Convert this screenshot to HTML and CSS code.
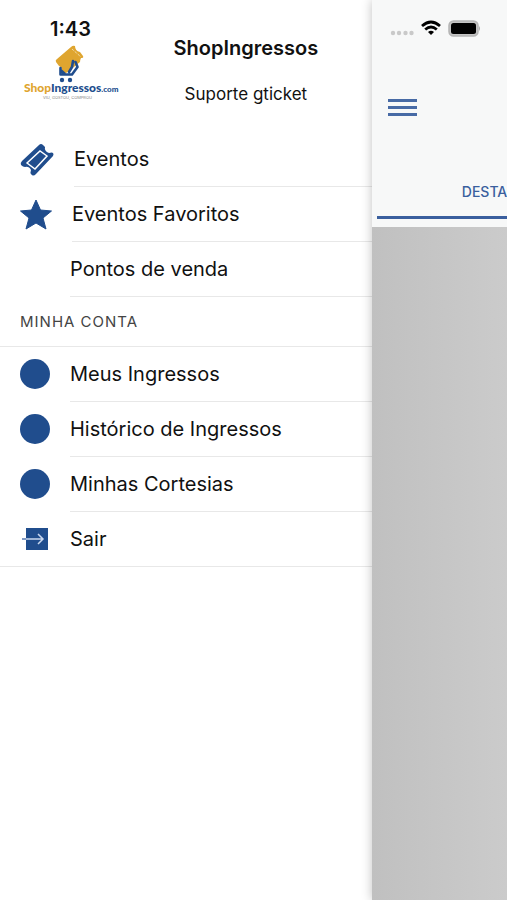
FILE: index.html
```html
<!DOCTYPE html>
<html lang="pt-BR">
<head>
<meta charset="utf-8">
<meta name="viewport" content="width=device-width, initial-scale=1">
<title>ShopIngressos</title>
<link rel="stylesheet" href="styles.css">
</head>
<body>
<div class="app">
  <aside class="drawer">
    <header class="profile">
      <div class="brand">
        <time class="clock">1:43</time>
        <svg class="logo" viewBox="0 0 96 58" role="img" aria-label="ShopIngressos.com">
          <path d="M33 18q-1-2 1-3L48 3q2-2 4-1 0 5 5 6l3 4q1 2-2 2-1 2-1 4L46 27l-3 2q-3 0-4-3 0-3-3-4Z" fill="#dfa52f"/>
          <path d="m49 5 9 8" stroke="#fbf0d8" stroke-width="1" stroke-dasharray="1 1" fill="none"/>
          <path d="M37.500 24v6.500H49l5.500-7.500-2-5M37.500 26l4 3.500M50 17l-1 6-3 5" fill="none" stroke="#204d8d" stroke-width="2.600" stroke-linejoin="round" stroke-linecap="round"/>
          <circle cx="39" cy="36" r="2.2" fill="#204d8d"/><circle cx="47" cy="36" r="2.2" fill="#204d8d"/>
          <text x="1" y="48" class="logo-name"><tspan class="logo-gold">Shop</tspan><tspan>Ingressos</tspan><tspan class="logo-com">.com</tspan></text>
          <text x="20" y="55" class="logo-tag">VIU, GOSTOU, COMPROU</text>
        </svg>
      </div>
      <div class="identity">
        <h1>ShopIngressos</h1>
        <p>Suporte gticket</p>
      </div>
    </header>
    <nav>
      <ul class="menu">
        <li><a href="#eventos">
          <svg class="icon wide" viewBox="0 0 34 34" aria-hidden="true"><path d="M2 18 19 2q2-2 4 0l2 2q-1 4 4 6 3-1 4 0 1 1 0 3L16 31q-3 3-5 0-1-1 0-4-2-4-6-3-2 0-4-2-1-2 1-4Z" fill="#204d8d"/><path d="m7 20 13-12 7 5-12 13Z" fill="none" stroke="#fff" stroke-width="1.500"/></svg>
          <span class="label">Eventos</span></a></li>
        <li><a href="#favoritos">
          <svg class="icon mid" viewBox="0 0 32 32" aria-hidden="true"><path d="m16 1 4.500 10 11 1-8.500 7 3 11-10-6-10 6 3-11-8.500-7 11-1Z" fill="#204d8d" stroke="#204d8d" stroke-linejoin="round"/></svg>
          <span class="label">Eventos Favoritos</span></a></li>
        <li><a href="#pontos"><span class="icon"></span><span class="label">Pontos de venda</span></a></li>
      </ul>
      <h2>MINHA CONTA</h2>
      <ul class="menu account">
        <li><a href="#ingressos"><span class="icon dot"></span><span class="label">Meus Ingressos</span></a></li>
        <li><a href="#historico"><span class="icon dot"></span><span class="label">Histórico de Ingressos</span></a></li>
        <li><a href="#cortesias"><span class="icon dot"></span><span class="label">Minhas Cortesias</span></a></li>
        <li><a href="#sair">
          <svg class="icon" viewBox="0 0 30 30" aria-hidden="true"><path d="M6 4h22v22H6Z" fill="#204d8d"/><path d="M2 15h4" stroke="#7f99c4" stroke-width="2"/><path d="M6 15h17m-5-5 5 5-5 5" fill="none" stroke="#c9d7ee" stroke-width="1.5"/></svg>
          <span class="label">Sair</span></a></li>
      </ul>
    </nav>
  </aside>
  <main class="page">
    <header class="topbar">
      <svg class="status" viewBox="0 0 92 20" role="img" aria-label="Wi-Fi e bateria">
        <g fill="#c9c9c9"><circle cx="5" cy="15" r="2.2"/><circle cx="11" cy="15" r="2.2"/><circle cx="17.500" cy="15" r="2.2"/><circle cx="23.500" cy="15" r="2.200"/></g>
        <g fill="none" stroke="#000" stroke-width="2.800"><path d="M34 8q9-8 18 0"/><path d="M37.200 11.500q5.800-5 11.600 0"/></g>
        <path d="m43 17-3-3q3-2.500 6 0Z" fill="#000"/>
        <rect x="61" y="3" width="29" height="15" rx="4.500" fill="#c4c4c4" stroke="#b4b4b4" stroke-width="1.500"/>
        <rect x="63" y="5" width="25" height="11" rx="2.500"/>
        <path d="M91 8q2 2.500 0 5Z" fill="#aaa"/>
      </svg>
      <button class="burger" type="button" aria-label="Menu"><span></span><span></span><span></span></button>
      <div class="tabs"><a href="#destaques">DESTAQUES</a></div>
    </header>
    <div class="content"></div>
  </main>
</div>
</body>
</html>
```
FILE: styles.css
```css
* { box-sizing: border-box; }

body {
  margin: 0;
  background: #fff;
  color: #111;
  font-family: Inter, "Liberation Sans", sans-serif;
}

a { color: inherit; text-decoration: none; }

.app {
  display: grid;
  grid-template-columns: minmax(0, 11fr) minmax(0, 4fr);
  min-height: 100vh;
}

.profile {
  display: flex;
  height: 132px;
}

.brand {
  display: flex;
  flex-direction: column;
  width: 120px;
  padding: 18px 0 0 23px;
}

.clock {
  padding-left: 27px;
  font-size: 20px;
  font-weight: 600;
  line-height: 22px;
}

.logo {
  width: 96px;
  height: 58px;
  margin-top: 4px;
  overflow: visible;
}

.logo-name {
  fill: #204d8d;
  font-family: Lato, sans-serif;
  font-size: 12px;
  font-weight: 900;
}

.logo-gold { fill: #dfa52f; }
.logo-com { font-size: 8px; }

.logo-tag {
  fill: #888;
  font-size: 4px;
}

.identity {
  flex: 1;
  padding-top: 36px;
  text-align: center;
}

h1 {
  margin: 0;
  font-size: 20px;
  font-weight: 600;
  line-height: 24px;
}

p {
  margin: 24px 0 0;
  font-size: 17px;
  line-height: 20px;
}

.menu {
  margin: 0;
  padding: 0;
  list-style: none;
}

.menu a {
  display: flex;
  height: 55px;
  padding-left: 20px;
  align-items: center;
  gap: 20px;
}

.icon {
  flex: none;
  width: 30px;
  height: 30px;
}

.mid { width: 32px; height: 32px; }
.wide { width: 34px; height: 34px; }

.dot {
  border-radius: 50%;
  background: #204d8d;
}

.account .icon { margin-bottom: 1px; }

.label {
  flex: 1;
  border-bottom: 1px solid #e8e8e8;
  font-size: 20px;
  line-height: 54px;
}

.account { border-bottom: 1px solid #e8e8e8; }
.account li:last-child a { height: 54px; }
.account li:last-child .label { border: 0; }

h2 {
  margin: 0;
  padding-left: 20px;
  border-bottom: 1px solid #e8e8e8;
  color: #444;
  font-size: 15px;
  font-weight: 400;
  letter-spacing: 1px;
  line-height: 49px;
}

.page {
  display: flex;
  flex-direction: column;
  box-shadow: 0 0 10px rgba(0, 0, 0, 0.25);
}

.topbar {
  display: flex;
  flex-direction: column;
  height: 227px;
  background: #f7f8f8;
  overflow: hidden;
}

.status {
  width: 92px;
  height: 20px;
  margin: 18px 0 0 16px;
  overflow: visible;
}

.burger {
  display: flex;
  flex-direction: column;
  gap: 4px;
  width: 29px;
  margin: 61px 0 0 16px;
  padding: 0;
  border: 0;
  background: none;
}

.burger span {
  width: 100%;
  height: 3px;
  background: #476aa5;
}

.tabs {
  margin-top: auto;
  padding: 0 0 8px 5px;
}

.tabs a {
  display: block;
  padding-left: 85px;
  border-bottom: 3px solid #3a5f9e;
  color: #3a5f9e;
  font-size: 14px;
  font-weight: 500;
  line-height: 48px;
  white-space: nowrap;
}

.content {
  flex: 1;
  background: linear-gradient(90deg, #c0c0c0, #cbcbcb);
}
```
